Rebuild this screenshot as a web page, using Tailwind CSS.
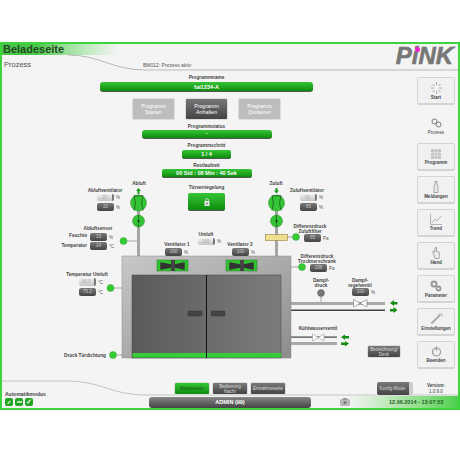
<!DOCTYPE html>
<html lang="de">
  <head>
    <meta charset="UTF-8" />
    <title>Beladeseite</title>
    <script src="https://cdn.jsdelivr.net/npm/@tailwindcss/browser@4"></script>
  </head>
  <body class="bg-white font-['Liberation_Sans',sans-serif]">
    <div class="relative w-[460px] h-[460px] overflow-hidden pt-[42px]">
      <!-- Rahmen -->
      <div class="w-[460px] h-[368px] border-2 border-[#3ed43e] bg-[#f4f4f4] flex flex-col justify-between">
        <div class="h-[26px] flex justify-between">
          <div class="flex flex-col">
            <div class="w-[116px] h-[11px] pl-px bg-linear-to-r from-[#49c649] from-30% via-[#a5e3a5] via-60% to-[#f4f4f4] text-[11px] leading-[11px] font-bold text-[#234a23]">Beladeseite</div>
            <div class="pl-[2px] pt-[5px] text-[7.500px] leading-[9px] text-[#555]">Prozess</div>
          </div>
          <div class="relative pr-[2px] text-[24px] leading-[24px] font-bold italic text-[#777] [-webkit-text-stroke:0.6px_#777]">PiNK<span class="align-top text-[4px] leading-[8px] [-webkit-text-stroke:0px]">®</span></div>
        </div>
        <div class="h-[30px] flex justify-between items-end">
          <div class="flex flex-col gap-[1px] pl-[3px] pb-[2px]">
            <div class="text-[5px] leading-[6px] font-bold text-[#444]">Automatikmodus</div>
            <div class="flex gap-[2px]">
              <div class="w-[8px] h-[8px] rounded-[2px] bg-[#1fa51f] flex items-center justify-center"><div class="w-[4px] h-[1px] bg-white -rotate-45"></div></div>
              <div class="w-[8px] h-[8px] rounded-[2px] bg-[#1fa51f] flex items-center justify-center"><div class="w-[5px] h-[2px] bg-white/70"></div></div>
              <div class="w-[8px] h-[8px] rounded-[2px] bg-[#1fa51f] flex items-center justify-center text-[7px] leading-[8px] text-white font-bold">✓</div>
            </div>
          </div>
          <div class="flex h-[12px] items-center">
            <div class="w-[162px] h-[11px] rounded-[3px] bg-linear-to-b from-[#888] to-[#444] text-white text-[5.500px] leading-[11px] font-bold text-center">ADMIN (99)</div>
            <div class="w-[147px] h-[12px] bg-linear-to-r from-[#f4f4f4] from-25% to-[#4bd04b] flex items-center">
              <svg class="ml-[29px] w-[10px] h-[8px]" viewBox="0 0 10 8"><rect x="0.5" y="1.5" width="9" height="6" rx="1" fill="#bbb" stroke="#888" stroke-width="0.5"/><rect x="3" y="0" width="4" height="2" fill="#999"/><circle cx="5" cy="4.5" r="1.6" fill="#777"/></svg>
              <div class="ml-[39px] text-[5.500px] leading-[6px] font-bold text-[#1f5f1f] whitespace-nowrap">12.06.2014 - 13:07:53</div>
            </div>
          </div>
        </div>
      </div>

      <!-- Anlagenbild: freie Zeichenfläche -->
      <svg class="absolute left-0 top-0" width="460" height="460" viewBox="0 0 460 460">
        <defs>
          <linearGradient id="gehaeuse" x1="0" y1="0" x2="1" y2="1"><stop offset="0" stop-color="#c8c8c8"/><stop offset="1" stop-color="#8c8c8c"/></linearGradient>
          <linearGradient id="tuer" x1="0" y1="0" x2="1" y2="0"><stop offset="0" stop-color="#5a5a5a"/><stop offset="1" stop-color="#7c7c7c"/></linearGradient>
        </defs>
        <path d="M68 55 C 100 55, 112 70, 145 70 L458 70" fill="none" stroke="#b9b9b9" stroke-width="1"/>
        <path d="M2 381 L68 381 C 100 381, 112 395, 145 395 L458 395" fill="none" stroke="#c4c4c4" stroke-width="1"/>
        <!-- Rohre -->
        <rect x="137" y="208" width="3" height="48" fill="#a6a6a6"/>
        <rect x="275" y="208" width="3" height="48" fill="#a6a6a6"/>
        <path d="M127 241 H137 M114 288 H122 M117 355 H122 M287 237 H293 M291 267 H299 M321 296 V303" stroke="#a6a6a6" stroke-width="1"/>
        <rect x="291" y="302" width="94" height="3" fill="#a9a9a9"/>
        <rect x="291" y="309.500" width="94" height="1.500" fill="#444"/>
        <rect x="291" y="336.500" width="46" height="1.200" fill="#444"/>
        <rect x="291" y="342" width="46" height="3" fill="#a9a9a9"/>
        <!-- Kammer -->
        <rect x="122" y="256" width="169" height="102" fill="url(#gehaeuse)" stroke="#8a8a8a" stroke-width="0.5"/>
        <rect x="132" y="275" width="149" height="83" fill="url(#tuer)" stroke="#444" stroke-width="0.5"/>
        <rect x="132.500" y="353" width="148.500" height="4.500" fill="#35cc35"/>
        <path d="M206.500 275 V358" stroke="#111" stroke-width="1"/>
        <rect x="188" y="311" width="14" height="5" rx="1" fill="#444" stroke="#333" stroke-width="0.5"/>
        <rect x="211" y="311" width="14" height="5" rx="1" fill="#444" stroke="#333" stroke-width="0.5"/>
        <!-- Ventilatoren Kammer -->
        <rect x="157" y="260" width="31" height="11" fill="#2fc42f" stroke="#2a7a2a" stroke-width="0.5"/>
        <path d="M161 263 L171 265 L171 267 L161 269 Z M184 263 L175 265 L175 267 L184 269 Z" fill="#333" stroke="#333" stroke-width="1.500" stroke-linejoin="round"/>
        <rect x="171" y="260" width="4" height="11" fill="#444"/>
        <rect x="226" y="260" width="31" height="11" fill="#2fc42f" stroke="#2a7a2a" stroke-width="0.5"/>
        <path d="M230 263 L240 265 L240 267 L230 269 Z M253 263 L244 265 L244 267 L253 269 Z" fill="#333" stroke="#333" stroke-width="1.500" stroke-linejoin="round"/>
        <rect x="240" y="260" width="4" height="11" fill="#444"/>
        <!-- Abluft -->
        <path d="M138.500 188 L141 191 H139.500 V194 H137.500 V191 H136 Z" fill="#189a18"/>
        <circle cx="138.500" cy="203" r="8" fill="#35c435" stroke="#2a8a2a" stroke-width="0.5"/>
        <path d="M134 195.500 Q137 203 134 210.500 M143 195.500 Q140 203 143 210.500 M134 195.800 H143" fill="none" stroke="#144a14" stroke-width="0.7"/>
        <circle cx="138.500" cy="221" r="6" fill="#35c435" stroke="#2a8a2a" stroke-width="0.5"/>
        <path d="M138.500 215 V227" stroke="#144a14" stroke-width="0.6"/><circle cx="138.500" cy="221" r="1" fill="#111"/>
        <!-- Zuluft -->
        <path d="M276.500 193.500 L279 190.500 H277.500 V188 H275.500 V190.500 H274 Z" fill="#189a18"/>
        <circle cx="276.500" cy="203" r="8" fill="#35c435" stroke="#2a8a2a" stroke-width="0.5"/>
        <path d="M272 195.500 Q275 203 272 210.500 M281 195.500 Q278 203 281 210.500 M272 195.800 H281" fill="none" stroke="#144a14" stroke-width="0.7"/>
        <circle cx="276.500" cy="221" r="6" fill="#35c435" stroke="#2a8a2a" stroke-width="0.5"/>
        <path d="M276.500 215 V227" stroke="#144a14" stroke-width="0.6"/><circle cx="276.500" cy="221" r="1" fill="#111"/>
        <rect x="265.500" y="234.500" width="22" height="6" fill="#efe08f" stroke="#8d7f3a" stroke-width="0.6"/>
        <!-- Messstellen -->
        <circle cx="123.500" cy="241" r="3.500" fill="#33cc33" stroke="#2a9a2a" stroke-width="0.4"/>
        <circle cx="110.500" cy="288" r="3.500" fill="#33cc33" stroke="#2a9a2a" stroke-width="0.4"/>
        <circle cx="113" cy="355" r="3.500" fill="#33cc33" stroke="#2a9a2a" stroke-width="0.4"/>
        <circle cx="296" cy="237" r="3.500" fill="#33cc33" stroke="#2a9a2a" stroke-width="0.4"/>
        <circle cx="302" cy="267" r="3.500" fill="#33cc33" stroke="#2a9a2a" stroke-width="0.4"/>
        <circle cx="321" cy="293" r="3.500" fill="#777" stroke="#555" stroke-width="0.4"/>
        <!-- Ventile -->
        <path d="M353.500 299.500 L367 307 V299.500 L353.500 307 Z" fill="#fff" stroke="#777" stroke-width="0.6"/>
        <path d="M312.500 334 L324 341 V334 L312.500 341 Z" fill="#fff" stroke="#999" stroke-width="0.6"/>
        <!-- Pfeile -->
        <path d="M390 303 L394 300 V302 H397.500 V304.500 H394 V306 Z M397.500 310 L393.500 307 V309 H390 V311.500 H393.500 V313 Z" fill="#148f14"/>
        <path d="M341 337 L345 334.500 V336 H349 V338.500 H345 V340 Z M349 343.500 L345 341 V342.500 H341 V345 H345 V346.500 Z" fill="#148f14"/>
      </svg>

      <!-- PiNK Punkt -->
      <div class="absolute left-[415px] top-[47px] w-[5px] h-[5px] rounded-full bg-[#f01fd0]"></div>
      <div class="absolute left-[143px] top-[62px] text-[5px] leading-[6px] text-[#555]">BM012: Prozess aktiv</div>

      <!-- Programm -->
      <div class="absolute left-[100px] top-[75px] w-[213px] flex flex-col items-center text-[4.700px] leading-[6px] font-bold text-[#444]">
        <div>Programmname</div>
        <div class="w-[213px] h-[10px] mt-[1px] rounded-[3px] bg-linear-to-b from-[#35c535] to-[#0a8d0a] border-b border-[#555] text-white text-[5.500px] leading-[10px] text-center">fat1234-A</div>
        <div class="flex gap-[10px] mt-[6px] font-normal text-[5.300px] text-white text-center">
          <div class="w-[43px] h-[22px] rounded-[2px] bg-[#bdbdbd] border border-[#ddd] flex items-center justify-center">Programm<br />Starten</div>
          <div class="w-[43px] h-[22px] rounded-[2px] bg-linear-to-b from-[#777] to-[#444] border border-[#ddd] flex items-center justify-center">Programm<br />Anhalten</div>
          <div class="w-[43px] h-[22px] rounded-[2px] bg-[#bdbdbd] border border-[#ddd] flex items-center justify-center">Programm<br />Quittieren</div>
        </div>
        <div class="mt-[4px]">Programmstatus</div>
        <div class="w-[130px] h-[9px] rounded-[3px] bg-linear-to-b from-[#35c535] to-[#0a8d0a] border-b border-[#555] text-white leading-[8px] text-center">-</div>
        <div class="mt-[4px]">Programmschritt</div>
        <div class="w-[49px] h-[9px] mt-[1px] rounded-[2px] bg-linear-to-b from-[#35c535] to-[#0a8d0a] border-b border-[#555] text-white text-[5.500px] leading-[8px] text-center">1 / 4</div>
        <div class="mt-[4px]">Restlaufzeit</div>
        <div class="w-[90px] h-[9px] rounded-[2px] bg-linear-to-b from-[#35c535] to-[#0a8d0a] border-b border-[#555] text-white text-[5.500px] leading-[8px] text-center">00 Std : 08 Min : 40 Sek</div>
        <div class="mt-[7px]">Türverriegelung</div>
        <div class="w-[37px] h-[18px] mt-[2px] rounded-[2px] bg-linear-to-b from-[#35c535] to-[#0a8d0a] border-b border-[#555] flex items-center justify-center">
          <svg width="6" height="8" viewBox="0 0 6 8"><path d="M1.500 3.500 V2 A1.500 1.500 0 0 1 4.500 2 V3.500" fill="none" stroke="#ddd" stroke-width="0.8"/><rect x="0.500" y="3" width="5" height="5" fill="#e8e8e8"/><rect x="2.500" y="4.500" width="1" height="2" fill="#444"/></svg>
        </div>
      </div>

      <!-- Beschriftungen Anlage -->
      <div class="text-[4.700px] leading-[5px] font-bold text-[#444]">
        <div class="absolute left-[139px] top-[181px] -translate-x-1/2">Abluft</div>
        <div class="absolute left-[276px] top-[181px] -translate-x-1/2">Zuluft</div>
        <div class="absolute left-[105px] top-[188px] -translate-x-1/2 whitespace-nowrap">Abluftventilator</div>
        <div class="absolute left-[307px] top-[188px] -translate-x-1/2 whitespace-nowrap">Zuluftventilator</div>
        <div class="absolute left-[98px] top-[226px] -translate-x-1/2 whitespace-nowrap">Abluftsensor</div>
        <div class="absolute left-[67px] top-[233px] w-[20px] text-right whitespace-nowrap">Feuchte</div>
        <div class="absolute left-[57px] top-[243px] w-[30px] text-right whitespace-nowrap">Temperatur</div>
        <div class="absolute left-[87px] top-[272px] -translate-x-1/2 whitespace-nowrap">Temperatur Umluft</div>
        <div class="absolute left-[206px] top-[232px] -translate-x-1/2 whitespace-nowrap">Umluft</div>
        <div class="absolute left-[177px] top-[242px] -translate-x-1/2 whitespace-nowrap">Ventilator 1</div>
        <div class="absolute left-[240px] top-[242px] -translate-x-1/2 whitespace-nowrap">Ventilator 2</div>
        <div class="absolute left-[310px] top-[224px] -translate-x-1/2 text-center whitespace-nowrap">Differenzdruck<br />Zuluftfilter</div>
        <div class="absolute left-[317px] top-[254px] -translate-x-1/2 text-center whitespace-nowrap">Differenzdruck<br />Trocknerschrank</div>
        <div class="absolute left-[321px] top-[278px] -translate-x-1/2 text-center whitespace-nowrap">Dampf-<br />druck</div>
        <div class="absolute left-[360px] top-[278px] -translate-x-1/2 text-center whitespace-nowrap">Dampf-<br />regelventil</div>
        <div class="absolute left-[318px] top-[326px] -translate-x-1/2 whitespace-nowrap">Kühlwasserventil</div>
        <div class="absolute left-[64px] top-[353px] whitespace-nowrap">Druck Türdichtung</div>
      </div>

      <!-- Werte -->
      <div class="text-[4.500px] leading-[7px] text-center">
        <div class="absolute left-[97px] top-[194px] flex gap-[2px] items-center text-[#aaa]"><div class="w-[17px] h-[7px] rounded-[2px] bg-linear-to-b from-[#f2f2f2] to-[#c4c4c4] border-r-2 border-[#777]">20</div><span class="text-[#555]">%</span></div>
        <div class="absolute left-[97px] top-[203px] flex gap-[2px] items-center text-[#ccc]"><div class="w-[17px] h-[8px] rounded-[2px] bg-linear-to-b from-[#7a7a7a] to-[#444]">20</div><span class="text-[#555]">%</span></div>
        <div class="absolute left-[300px] top-[194px] flex gap-[2px] items-center text-[#aaa]"><div class="w-[17px] h-[7px] rounded-[2px] bg-linear-to-b from-[#f2f2f2] to-[#c4c4c4] border-r-2 border-[#777]">65</div><span class="text-[#555]">%</span></div>
        <div class="absolute left-[300px] top-[203px] flex gap-[2px] items-center text-[#ccc]"><div class="w-[17px] h-[8px] rounded-[2px] bg-linear-to-b from-[#7a7a7a] to-[#444]">65</div><span class="text-[#555]">%</span></div>
        <div class="absolute left-[90px] top-[233px] flex gap-[2px] items-center text-[#ccc]"><div class="w-[17px] h-[8px] rounded-[2px] bg-linear-to-b from-[#7a7a7a] to-[#444]">33</div><span class="text-[#555]">%</span></div>
        <div class="absolute left-[90px] top-[242px] flex gap-[2px] items-center text-[#ccc]"><div class="w-[17px] h-[8px] rounded-[2px] bg-linear-to-b from-[#7a7a7a] to-[#444]">24</div><span class="text-[#555]">°C</span></div>
        <div class="absolute left-[79px] top-[278px] flex gap-[2px] items-center text-[#aaa]"><div class="w-[17px] h-[8px] rounded-[2px] bg-linear-to-b from-[#f2f2f2] to-[#c4c4c4] border-r-2 border-[#777]">80.0</div><span class="text-[#555]">°C</span></div>
        <div class="absolute left-[79px] top-[288px] flex gap-[2px] items-center text-[#ccc]"><div class="w-[17px] h-[8px] rounded-[2px] bg-linear-to-b from-[#7a7a7a] to-[#444]">75.2</div><span class="text-[#555]">°C</span></div>
        <div class="absolute left-[198px] top-[238px] flex gap-[2px] items-center text-[#aaa]"><div class="w-[17px] h-[7px] rounded-[2px] bg-linear-to-b from-[#f2f2f2] to-[#c4c4c4] border-r-2 border-[#777]">100</div><span class="text-[#555]">%</span></div>
        <div class="absolute left-[165px] top-[248px] flex gap-[2px] items-center text-[#ccc]"><div class="w-[17px] h-[8px] rounded-[2px] bg-linear-to-b from-[#7a7a7a] to-[#444]">100</div><span class="text-[#555]">%</span></div>
        <div class="absolute left-[232px] top-[248px] flex gap-[2px] items-center text-[#ccc]"><div class="w-[17px] h-[8px] rounded-[2px] bg-linear-to-b from-[#7a7a7a] to-[#444]">100</div><span class="text-[#555]">%</span></div>
        <div class="absolute left-[304px] top-[234px] flex gap-[2px] items-center text-[#ccc]"><div class="w-[17px] h-[8px] rounded-[2px] bg-linear-to-b from-[#7a7a7a] to-[#444]">65</div><span class="text-[#555]">Pa</span></div>
        <div class="absolute left-[310px] top-[264px] flex gap-[2px] items-center text-[#ccc]"><div class="w-[17px] h-[8px] rounded-[2px] bg-linear-to-b from-[#7a7a7a] to-[#444]">298</div><span class="text-[#555]">Pa</span></div>
        <div class="absolute left-[352px] top-[288px] flex gap-[2px] items-center text-[#ccc]"><div class="w-[17px] h-[8px] rounded-[2px] bg-linear-to-b from-[#7a7a7a] to-[#444]">100</div><span class="text-[#555]">%</span></div>
      </div>

      <div class="absolute left-[367px] top-[345px] w-[34px] h-[13px] rounded-[2px] bg-linear-to-b from-[#7a7a7a] to-[#444] border border-[#ddd] text-[4.500px] leading-[5px] text-[#ddd] text-center flex items-center justify-center">Bezeichnung/<br />Desk</div>

      <!-- Seitenleiste -->
      <div class="absolute left-[417px] top-[77px] w-[38px] flex flex-col gap-[5px] text-[4.500px] leading-[5px] font-bold text-[#444] text-center">
        <div class="h-[28px] rounded-[2px] bg-[#f1f1f1] border border-[#d4d4d4] border-b-2 flex flex-col items-center justify-center gap-[1px]">
          <svg width="11" height="12" viewBox="0 0 11 12" stroke="#999" stroke-width="0.8" fill="none"><path d="M5.500 0 V3 M5.500 9 V12 M0 6 H3 M8 6 H11 M1.500 2 L3.500 4 M7.500 8 L9.500 10 M9.500 2 L7.500 4 M3.500 8 L1.500 10"/></svg>
          Start
        </div>
        <div class="h-[28px] pt-[4px] flex flex-col items-center justify-center gap-[2px] font-normal">
          <svg width="11" height="10" viewBox="0 0 11 10" stroke="#777" stroke-width="1" fill="none"><circle cx="3.500" cy="3.500" r="2.500"/><circle cx="7.500" cy="6.500" r="2.500"/></svg>
          Prozess
        </div>
        <div class="h-[28px] rounded-[2px] bg-[#f1f1f1] border border-[#d4d4d4] border-b-2 flex flex-col items-center justify-center gap-[1px]">
          <svg width="10" height="10" viewBox="0 0 10 10" fill="#c4c4c4"><rect width="3" height="3"/><rect x="3.500" width="3" height="3"/><rect x="7" width="3" height="3"/><rect y="3.500" width="3" height="3"/><rect x="3.500" y="3.500" width="3" height="3"/><rect x="7" y="3.500" width="3" height="3"/><rect y="7" width="3" height="3"/><rect x="3.500" y="7" width="3" height="3"/><rect x="7" y="7" width="3" height="3"/></svg>
          Programm
        </div>
        <div class="h-[28px] rounded-[2px] bg-[#f1f1f1] border border-[#d4d4d4] border-b-2 flex flex-col items-center justify-center gap-[1px]">
          <svg width="6" height="12" viewBox="0 0 6 12"><path d="M2 0.500 H4 V3 L5 5 V11.500 H1 V5 L2 3 Z" fill="#e8e8e8" stroke="#888" stroke-width="0.7"/></svg>
          Meldungen
        </div>
        <div class="h-[28px] rounded-[2px] bg-[#f1f1f1] border border-[#d4d4d4] border-b-2 flex flex-col items-center justify-center gap-[1px]">
          <svg width="12" height="11" viewBox="0 0 12 11" fill="none" stroke="#999" stroke-width="0.7"><path d="M0.500 0 V10.500 H12"/><path d="M1.500 9 L5 5 L7 7 L11 2"/></svg>
          Trend
        </div>
        <div class="h-[28px] rounded-[2px] bg-[#f1f1f1] border border-[#d4d4d4] border-b-2 flex flex-col items-center justify-center gap-[1px]">
          <svg width="8" height="12" viewBox="0 0 8 12"><path d="M3 0.500 V5 L1 4 Q0 5 2 8 L3 11.500 H7 L7.500 6 Q7.500 4.500 4.500 4.500 V0.500 Z" fill="#eee" stroke="#888" stroke-width="0.7"/></svg>
          Hand
        </div>
        <div class="h-[28px] rounded-[2px] bg-[#f1f1f1] border border-[#d4d4d4] border-b-2 flex flex-col items-center justify-center gap-[1px]">
          <svg width="12" height="12" viewBox="0 0 12 12" fill="none" stroke="#999"><circle cx="4" cy="4" r="2.500" stroke-width="2"/><circle cx="8.500" cy="8.500" r="2" stroke-width="1.800"/></svg>
          Parameter
        </div>
        <div class="h-[28px] rounded-[2px] bg-[#f1f1f1] border border-[#d4d4d4] border-b-2 flex flex-col items-center justify-center gap-[1px]">
          <svg width="13" height="12" viewBox="0 0 13 12" fill="none" stroke="#aaa" stroke-width="2"><path d="M1.500 10.500 L10 2"/><path d="M9 1 L12 1 L12 3.500" stroke-width="1"/></svg>
          Einstellungen
        </div>
        <div class="h-[28px] rounded-[2px] bg-[#f1f1f1] border border-[#d4d4d4] border-b-2 flex flex-col items-center justify-center gap-[1px]">
          <svg width="11" height="11" viewBox="0 0 11 11" fill="none" stroke="#999" stroke-width="1.200"><circle cx="5.500" cy="6" r="4"/><path d="M5.500 0.500 V5"/></svg>
          Beenden
        </div>
      </div>

      <!-- Untere Tasten -->
      <div class="absolute left-[174px] top-[382px] flex gap-[2px] text-[4.500px] leading-[5px] text-center text-[#ddd]">
        <div class="w-[36px] h-[13px] rounded-[2px] bg-linear-to-b from-[#35c535] to-[#0a8d0a] border border-[#ddd] text-[#155a15] flex items-center justify-center">Beladeseite</div>
        <div class="w-[36px] h-[13px] rounded-[2px] bg-linear-to-b from-[#7a7a7a] to-[#444] border border-[#ddd] flex items-center justify-center">Bedienung<br />Nacht</div>
        <div class="w-[36px] h-[13px] rounded-[2px] bg-linear-to-b from-[#7a7a7a] to-[#444] border border-[#ddd] flex items-center justify-center">Entnahmeseite</div>
      </div>
      <div class="absolute left-[377px] top-[382px] w-[36px] h-[13px] rounded-[2px] bg-linear-to-b from-[#7a7a7a] to-[#444] border-r-[4px] border-[#ccc] text-[4.500px] leading-[13px] text-[#ddd] text-center">Konfig-Mode:</div>
      <div class="absolute left-[426px] top-[383px] w-[20px] text-[4.500px] leading-[5.500px] text-[#444] text-center"><b>Version:</b><br />1.0.9.0</div>
    </div>
  </body>
</html>
